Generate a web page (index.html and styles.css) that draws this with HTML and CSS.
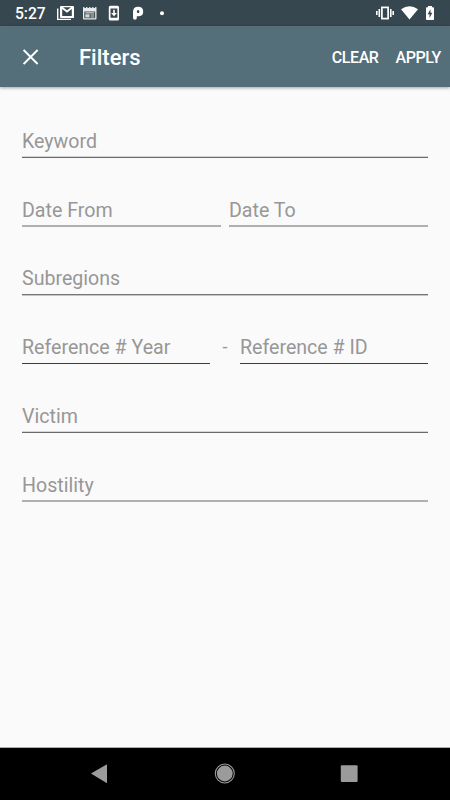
FILE: index.html
```html
<!DOCTYPE html>
<html lang="en">
<head>
<meta charset="utf-8">
<title>Filters</title>
<link rel="stylesheet" href="styles.css">
</head>
<body>
<div class="screen">
  <div class="status">
    <span class="time">5:27</span>
    <svg class="status-left" width="112" height="20" viewBox="56 3 112 20" fill="#fff">
      <path d="M57.7 8.5V19.4H71" fill="none" stroke="#fff" stroke-width="1.4"/>
      <path fill-rule="evenodd" d="M61 6H73Q74 6 74 7V17.500Q74 18 73 18H61Q60 18 60 17V7Q60 6 61 6ZM62.200 9V16H71.800V9L67 12.800ZM63 7.200L67 10.300L71 7.200Z"/>
      <path fill="#e8ebec" fill-rule="evenodd" d="M83 8H96.500V18.500Q96.500 19.500 95.500 19.500H84Q83 19.500 83 18.500ZM84.300 11.400V18.200H95.200V11.400Z"/>
      <path fill="#d0d5d7" d="M83 7h1.500v1.200h-1.500zM86 7h1.500v1.200h-1.500zM89 7h1.500v1.200h-1.500zM92 7h1.500v1.200h-1.500zM95 7h1.500v1.200h-1.500zM85.300 12.300h9v1.300h-9zM85.300 14.300h4.300v3.200h-4.300zM90.500 14.600h3.800v.9h-3.800zM90.500 16.500h3.800v.9h-3.800z"/>
      <path fill-rule="evenodd" d="M110.300 5.700H117.500Q119 5.700 119 7.200V19Q119 20.500 117.500 20.500H110.300Q108.800 20.500 108.800 19V7.200Q108.800 5.700 110.300 5.700ZM110.500 8.500V17.800H117.400V8.500Z"/>
      <path d="M113.200 9.800H114.800V13H117L114 16.200L111 13H113.200Z"/>
      <path fill-rule="evenodd" d="M133 12Q133 6.700 138.200 6.700Q143.200 6.700 143.200 11.500Q143.200 16.200 138.500 16.200H136.800V18Q136.800 19.700 135 19.700Q133 19.700 133 17.800ZM138.100 10.100A1.300 1.500 0 1 0 138.100 13.100A1.300 1.500 0 1 0 138.100 10.100Z"/>
      <circle cx="162" cy="13.200" r="2"/>
    </svg>
    <svg class="status-right" width="60" height="20" viewBox="376 3 60 20" fill="#fff">
      <rect x="381.900" y="7.400" width="6.200" height="11.200" fill="none" stroke="#fff" stroke-width="1.700"/>
      <path d="M378.500 8.900h1.600v8.200h-1.600zM376 10.900h1.600v4.200h-1.600zM390 8.900h1.600v8.200h-1.600zM392.400 10.900h1.600v4.200h-1.600z"/>
      <path d="M401 9.200Q409.500 3.300 418 9.200L409.500 19.600Z"/>
      <path d="M428 6H432V7.300H433.200Q434 7.300 434 8.100V19.200Q434 20 433.200 20H426.800Q426 20 426 19.200V8.100Q426 7.300 426.800 7.300H428Z"/>
      <path fill="#37474f" d="M430.500 9.200L427.600 14.300H429.500V18L432.400 12.800H430.500Z"/>
    </svg>
  </div>
  <header class="bar">
    <svg class="close" width="16" height="16" viewBox="0 0 16 16" fill="none" stroke="#fff" stroke-width="1.900"><path d="M.6 1L14.600 15M14.600 1L.6 15"/></svg>
    <h1 class="title">Filters</h1>
    <span class="action clear">CLEAR</span>
    <span class="action">APPLY</span>
  </header>
  <main class="form">
    <div class="row"><div class="field late"><span>Keyword</span></div></div>
    <div class="row pair"><div class="field even"><span>Date From</span></div><div class="field even"><span>Date To</span></div></div>
    <div class="row"><div class="field early"><span>Subregions</span></div></div>
    <div class="row reference"><div class="field sharp"><span>Reference # Year</span></div><span class="dash">-</span><div class="field sharp"><span>Reference # ID</span></div></div>
    <div class="row"><div class="field late"><span>Victim</span></div></div>
    <div class="row"><div class="field even"><span>Hostility</span></div></div>
  </main>
  <nav class="nav">
    <svg width="450" height="52" viewBox="0 748 450 52" fill="#9b9b9b">
      <path d="M91 773.500L106.500 764.500Q107 764.500 107 765V782.500Q107 783 106.500 783Z"/>
      <circle cx="224.800" cy="773.500" r="7.900"/>
      <circle cx="224.800" cy="773.500" r="9.500" fill="none" stroke="#9b9b9b" stroke-width="1.100"/>
      <rect x="340.800" y="765.200" width="16.800" height="16.800" rx="1"/>
    </svg>
  </nav>
</div>
</body>
</html>
```

FILE: styles.css
```css
* { box-sizing: border-box; }
body { margin: 0; font-family: Roboto, sans-serif; background: #fafafa; }
.screen { width: 450px; height: 800px; display: flex; flex-direction: column; overflow: hidden; }
.status { height: 26px; flex: none; background: #37474f; display: flex; align-items: flex-start; padding: 3px 14px 0 15px; color: #fff; }
.time { width: 41px; font-size: 15.6px; line-height: 23px; font-weight: 500; }
.status-left { flex: none; }
.status-right { margin-left: auto; flex: none; }
.bar { height: 61px; flex: none; background: #546e7a; color: #fff; display: flex; align-items: center; padding: 0 9px 0 23px; box-shadow: 0 1px 3px rgba(0,0,0,.35); }
.close { flex: none; }
.title { margin: 2px auto 0 40px; font-size: 22px; line-height: 28px; font-weight: 500; }
.action { margin-top: 2px; font-size: 16px; letter-spacing: -.4px; line-height: 20px; font-weight: 500; }
.clear { margin-right: 17px; }
.form { flex: 1; padding: 34px 22px 0; display: grid; grid-auto-rows: 37px; align-content: start; row-gap: 31.8px; color: #979797; }
.row { display: flex; }
.pair { gap: 8px; }
.field { flex: 1; height: 37px; display: flex; flex-direction: column; justify-content: space-between; font-size: 19.6px; line-height: 41.4px; white-space: nowrap; }
.field span { height: 35px; }
.field::after { content: ""; height: 2px; }
.late::after { background: linear-gradient(#d5d5d5 50%, #696969 50%); }
.early { line-height: 39.4px; }
.early::after { background: linear-gradient(#777 50%, #c5c5c5 50%); }
.even::after { background: #b0b0b0; }
.sharp::after { background: linear-gradient(transparent 50%, #3e3a3c 50%); }
.dash { width: 30px; text-align: center; font-size: 18px; line-height: 39px; }
.nav { height: 53px; flex: none; background: #000; border-top: 1px solid #aaa; }
.nav svg { display: block; }
```
